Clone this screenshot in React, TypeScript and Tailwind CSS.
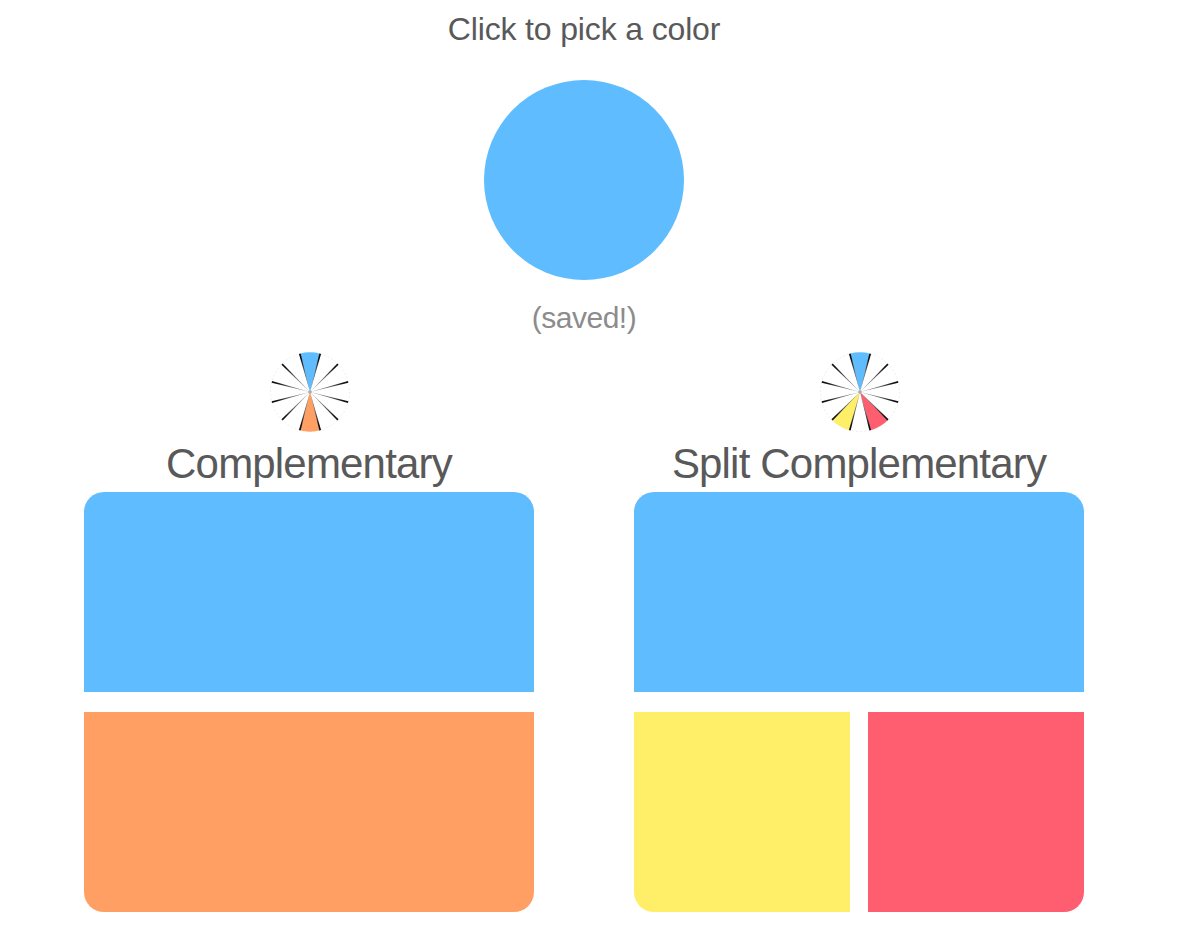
const BLUE = '#5fbdff'

// wedge slots around the small wheel, clockwise from the top
function wedge(index: number, r: number) {
  const a0 = ((index * 30 - 15 - 90) * Math.PI) / 180
  const a1 = ((index * 30 + 15 - 90) * Math.PI) / 180
  const x0 = 40 + r * Math.cos(a0)
  const y0 = 40 + r * Math.sin(a0)
  const x1 = 40 + r * Math.cos(a1)
  const y1 = 40 + r * Math.sin(a1)
  return `M40 40L${x0} ${y0}A${r} ${r} 0 0 1 ${x1} ${y1}Z`
}

function spoke(index: number, r: number) {
  const a = ((index * 30 + 15 - 90) * Math.PI) / 180
  const nx = -Math.sin(a)
  const ny = Math.cos(a)
  const x = 40 + r * Math.cos(a)
  const y = 40 + r * Math.sin(a)
  const w = 0.9
  return `M40 40L${x + nx * w} ${y + ny * w}L${x - nx * w} ${y - ny * w}Z`
}

function Wheel({ id, slots }: { id: string; slots: { index: number; color: string }[] }) {
  return (
    <svg width="80" height="80" viewBox="0 0 80 80" className="ml-[2px] block">
      <defs>
        <radialGradient id={id} gradientUnits="userSpaceOnUse" cx="40" cy="40" r="40">
          <stop offset="0" stopColor="#999999" />
          <stop offset="0.5" stopColor="#666666" />
          <stop offset="0.85" stopColor="#111111" />
        </radialGradient>
      </defs>
      <circle cx="40" cy="40" r="39.5" fill="none" stroke="#e2e2e2" strokeWidth="0.6" strokeDasharray="2 2" />
      {slots.map((s) => (
        <path key={s.index} d={wedge(s.index, 39.7)} fill={s.color} />
      ))}
      {Array.from({ length: 12 }).map((_, i) => (
        <path key={i} d={spoke(i, 39.5)} fill={`url(#${id})`} />
      ))}
      <circle cx="40" cy="40" r="1.8" fill="#aaaaaa" />
    </svg>
  )
}

function Scheme({ id, title, slots, children }: { id: string; title: string; slots: { index: number; color: string }[]; children: React.ReactNode }) {
  return (
    <div className="flex w-[450px] flex-col items-center">
      <Wheel id={id} slots={slots} />
      <h2 className="mt-[8px] h-[52px] text-[42px] leading-[48px] font-normal tracking-[-0.82px] text-[#595959] whitespace-nowrap">{title}</h2>
      <div className="h-[200px] w-full rounded-t-[20px] bg-[#5fbdff]" />
      {children}
    </div>
  )
}

export default function App() {
  return (
    <div className="h-[926px] w-[1168px] overflow-hidden bg-white font-['Liberation_Sans',Arial,sans-serif]">
      <div className="flex flex-col items-center pt-[10px]">
        <p className="h-[70px] text-[32px] leading-[38px] tracking-[-0.15px] text-[#595959]">Click to pick a color</p>
        <div className="h-[200px] w-[200px] rounded-full" style={{ backgroundColor: BLUE }} />
        <p className="mt-[20px] h-[52px] text-[30px] leading-[36px] tracking-[-0.5px] text-[#8c8c8c]">(saved!)</p>
      </div>
      <div className="flex justify-center gap-[100px]">
        <Scheme id="spoke-a" title="Complementary" slots={[{ index: 0, color: BLUE }, { index: 6, color: '#ff9f64' }]}>
          <div className="mt-[20px] h-[200px] w-full rounded-b-[20px] bg-[#ff9f64]" />
        </Scheme>
        <Scheme id="spoke-b" title="Split Complementary" slots={[{ index: 0, color: BLUE }, { index: 5, color: '#ff5e70' }, { index: 7, color: '#ffee67' }]}>
          <div className="mt-[20px] flex w-full gap-[18px]">
            <div className="h-[200px] flex-1 rounded-bl-[20px] bg-[#ffee67]" />
            <div className="h-[200px] flex-1 rounded-br-[20px] bg-[#ff5e70]" />
          </div>
        </Scheme>
      </div>
    </div>
  )
}
